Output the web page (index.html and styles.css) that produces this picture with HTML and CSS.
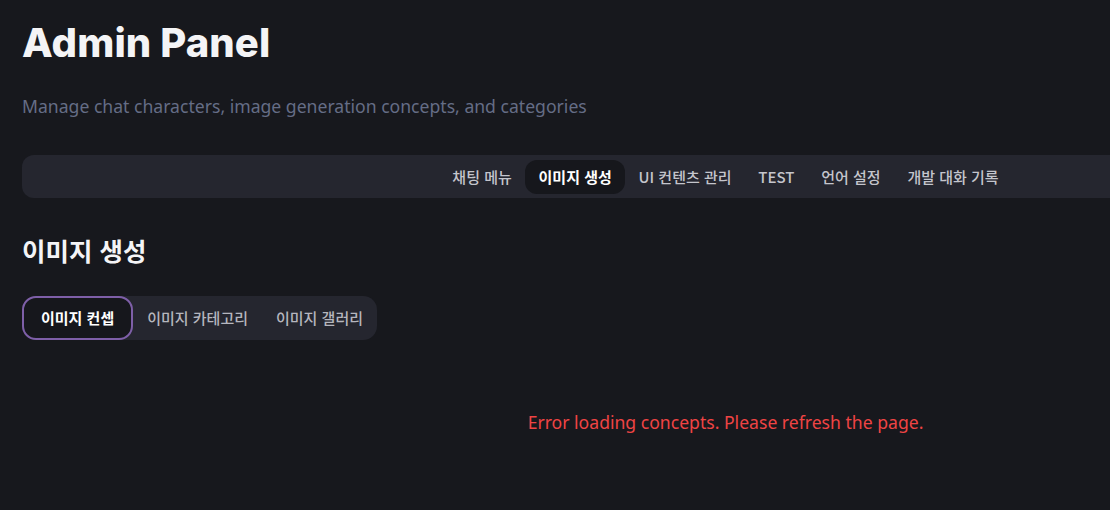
FILE: index.html
```html
<!DOCTYPE html>
<html lang="ko">
<head>
<meta charset="utf-8">
<title>Admin Panel</title>
<link rel="stylesheet" href="styles.css">
</head>
<body>
<div class="page">
  <header class="header">
    <h1 class="title">Admin Panel</h1>
    <p class="subtitle">Manage chat characters, image generation concepts, and categories</p>
  </header>
  <nav class="main-nav">
    <span class="nav-item">채팅 메뉴</span>
    <span class="nav-item active">이미지 생성</span>
    <span class="nav-item">UI 컨텐츠 관리</span>
    <span class="nav-item">TEST</span>
    <span class="nav-item">언어 설정</span>
    <span class="nav-item">개발 대화 기록</span>
  </nav>
  <section class="section">
    <h2 class="section-title">이미지 생성</h2>
    <div class="sub-tabs">
      <span class="sub-tab active">이미지 컨셉</span>
      <span class="sub-tab">이미지 카테고리</span>
      <span class="sub-tab">이미지 갤러리</span>
    </div>
    <p class="error">Error loading concepts. Please refresh the page.</p>
  </section>
</div>
</body>
</html>
```
FILE: styles.css
```css
html, body {
  margin: 0;
  padding: 0;
  background: #17181d;
  overflow: hidden;
}
body {
  font-family: "Noto Sans", "Noto Sans CJK KR", sans-serif;
  color: #f1f1f3;
}
.page {
  width: 1407px;
  padding-left: 22px;
}
.header {
  padding-top: 16px;
}
.title {
  margin: 0;
  font-family: Inter, "Noto Sans", sans-serif;
  font-weight: 800;
  font-size: 40px;
  line-height: 54px;
  letter-spacing: 0.1px;
  color: #f4f4f6;
}
.subtitle {
  margin: 24px 0 0;
  font-size: 17.6px;
  line-height: 24px;
  color: #656d86;
}
.main-nav {
  margin-top: 37px;
  height: 43px;
  background: #25262f;
  border-radius: 12px;
  display: flex;
  justify-content: center;
  align-items: center;
}
.nav-item {
  font-family: "Noto Sans CJK KR", "Noto Sans", sans-serif;
  font-size: 15px;
  font-weight: 500;
  color: #c4c5cc;
  padding: 0 13.4px;
  height: 34px;
  line-height: 34px;
  border-radius: 12px;
}
.nav-item.active {
  background: #16171c;
  color: #ffffff;
  font-weight: 700;
}
.section {
  padding-top: 34px;
}
.section-title {
  margin: 0;
  font-family: "Noto Sans CJK KR", sans-serif;
  font-size: 25.5px;
  font-weight: 700;
  line-height: 36px;
  color: #f4f4f6;
}
.sub-tabs {
  margin-top: 28px;
  display: inline-flex;
  background: #25262f;
  border-radius: 14px;
  height: 44px;
}
.sub-tab {
  font-family: "Noto Sans CJK KR", sans-serif;
  font-size: 15px;
  font-weight: 500;
  color: #b5b6be;
  padding: 0 12px;
  line-height: 40px;
  border: 2px solid transparent;
  border-radius: 14px;
}
.sub-tab.active {
  padding: 0 17px;
  border-color: #7e5fa8;
  background: #16171c;
  color: #ffffff;
  font-weight: 700;
}
.error {
  margin: 70px 0 0;
  text-align: center;
  font-size: 17.6px;
  line-height: 24px;
  color: #ef4444;
}
```
